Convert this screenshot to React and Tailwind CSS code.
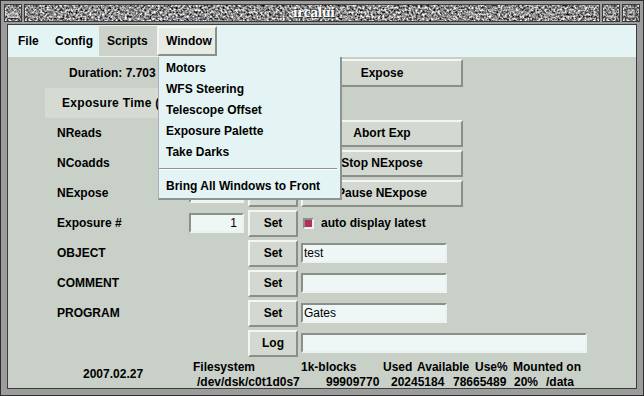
import React from 'react';

const up = 'border-2 border-t-[#f3f6f3] border-l-[#f3f6f3] border-b-[#8a9089] border-r-[#8a9089]';
const down = 'border-2 border-t-[#8a9089] border-l-[#8a9089] border-b-[#eef2ee] border-r-[#eef2ee]';

function Granite({ id, w, h, children }) {
  return (
    <svg width={w} height={h} className="block">
      <defs>
        <filter id={id} x="0" y="0" width="100%" height="100%" colorInterpolationFilters="sRGB">
          <feTurbulence type="fractalNoise" baseFrequency="0.45" numOctaves="3" seed="7" />
          <feColorMatrix
            type="matrix"
            values="1.7 0 0 0 -0.3  1.7 0 0 0 -0.3  1.7 0 0 0 -0.3  0 0 0 0 1"
          />
        </filter>
      </defs>
      <rect width={w} height={h} filter={`url(#${id})`} />
      {children}
    </svg>
  );
}

function TitleButton({ id, children }) {
  return (
    <div className="w-[18px] h-[18px] border border-[#3a3a3a] shrink-0">
      <Granite id={id} w={16} h={16}>
        {children}
      </Granite>
    </div>
  );
}

function Btn({ w, h = 'h-[27px]', children }) {
  return (
    <div className={`${w} ${h} ${up} shrink-0 bg-[#d3d9d1] flex items-center justify-center font-bold`}>
      {children}
    </div>
  );
}

function Entry({ w, right, children }) {
  return (
    <div
      className={`${w} h-[20px] ${down} shrink-0 bg-[#eef6f6] flex items-center font-normal ${
        right ? 'justify-end pr-[5px]' : 'pl-[1px]'
      }`}
    >
      {children}
    </div>
  );
}

// rows under the open menu keep their widgets but the covered texts are left out
function Row({ label, entry, btn = 'Set', children }) {
  return (
    <div className="flex h-[30px] items-center">
      <div className="w-[181px] pl-[49px] shrink-0">{label}</div>
      {entry !== undefined ? <Entry w="w-[55px]" right>{entry}</Entry> : <div className="w-[55px] shrink-0" />}
      <div className="ml-[4px]">
        <Btn w="w-[50px]">{btn}</Btn>
      </div>
      <div className="ml-[3px] flex items-center">{children}</div>
    </div>
  );
}

const menuItems = ['Motors', 'WFS Steering', 'Telescope Offset', 'Exposure Palette', 'Take Darks'];

export default function App() {
  return (
    <div className="relative w-[644px] h-[396px] bg-[#9c9c9c] border border-[#2f2f2f] flex flex-col overflow-hidden text-[12px] text-black font-['Liberation_Sans',Arial,sans-serif]">
      {/* title bar */}
      <div className="h-[23px] flex items-center px-[3px] gap-[2px] shrink-0">
        <TitleButton id="tb1">
          <rect x="3" y="9" width="10" height="4" fill="none" stroke="#f0f0f0" strokeWidth="1" />
          <line x1="3" y1="13.5" x2="13" y2="13.5" stroke="#303030" />
        </TitleButton>
        <div className="flex-1 h-[18px] border border-[#3a3a3a]">
          <Granite id="tstrip" w={574} h={16}>
            <text x="290" y="13" textAnchor="middle" fontFamily="Liberation Serif" fontWeight="bold" fontSize="15" fill="#2a2a2a">
              ircalui
            </text>
            <text x="289" y="12" textAnchor="middle" fontFamily="Liberation Serif" fontWeight="bold" fontSize="15" fill="#ffffff">
              ircalui
            </text>
          </Granite>
        </div>
        <TitleButton id="tb2">
          <path d="M9 5 V10 H5" fill="none" stroke="#303030" strokeWidth="1.2" />
          <path d="M10 4 V11 H4" fill="none" stroke="#eeeeee" strokeWidth="0.8" />
        </TitleButton>
        <TitleButton id="tb3">
          <rect x="4" y="4" width="8" height="9" fill="none" stroke="#303030" strokeWidth="1" />
          <rect x="5" y="5" width="6" height="7" fill="none" stroke="#e8e8e8" strokeWidth="0.7" />
        </TitleButton>
      </div>

      {/* client area */}
      <div className="flex-1 mx-[6px] mb-[6px] border border-[#3c3c3c] bg-[#c9d0c8] flex flex-col overflow-hidden">
        {/* menu bar */}
        <div className="h-[32px] shrink-0 bg-[#e4f4f4] flex items-center font-bold">
          <div className="w-[39px] pl-[10px]">File</div>
          <div className="w-[52px] pl-[8px]">Config</div>
          <div className="w-[58px] h-[30px] pl-[8px] bg-[#cdd3cb] flex items-center">Scripts</div>
          <div className={`w-[60px] h-[30px] pl-[7px] bg-[#e6ebe6] flex items-center ${up}`}>Window</div>
        </div>

        {/* form */}
        <div className="pt-[1px] font-bold">
          <div className="flex h-[30px] items-center">
            <div className="w-[293px] pl-[61px] shrink-0">Duration: 7.703</div>
            <Btn w="w-[162px]" h="h-[28px]">Expose</Btn>
          </div>
          <div className="flex h-[30px]">
            <div className="ml-[37px] w-[255px] bg-[#d5dbd3] flex items-center pl-[17px] tracking-[0.3px]">Exposure Time (</div>
          </div>
          <Row label="NReads" entry="" btn="">
            <Btn w="w-[162px]">Abort Exp</Btn>
          </Row>
          <Row label="NCoadds" entry="" btn="">
            <Btn w="w-[162px]">Stop NExpose</Btn>
          </Row>
          <Row label="NExpose" entry="" btn="">
            <Btn w="w-[162px]">Pause NExpose</Btn>
          </Row>
          <Row label="Exposure #" entry="1">
            <div className="flex items-center gap-[7px]">
              <div className={`w-[11px] h-[11px] ${down} bg-[#b03060] ml-[2px]`} />
              <span>auto display latest</span>
            </div>
          </Row>
          <Row label="OBJECT">
            <Entry w="w-[146px]">test</Entry>
          </Row>
          <Row label="COMMENT">
            <Entry w="w-[146px]"></Entry>
          </Row>
          <Row label="PROGRAM">
            <Entry w="w-[146px]">Gates</Entry>
          </Row>
          <Row label="" btn="Log">
            <Entry w="w-[286px]"></Entry>
          </Row>
          <div className="flex h-[30px] whitespace-nowrap">
            <div className="w-[185px] pl-[75px] pt-[9px] leading-[15px] shrink-0">2007.02.27</div>
            <div className="pt-[2px] leading-[15px]">
              <div className="flex">
                <span className="w-[108px] shrink-0">Filesystem</span>
                <span className="w-[82px] shrink-0">1k-blocks</span>
                <span className="w-[34px] shrink-0">Used</span>
                <span className="w-[58px] shrink-0">Available</span>
                <span className="w-[38px] shrink-0">Use%</span>
                <span>Mounted on</span>
              </div>
              <div className="flex ml-[4px]">
                <span className="w-[129px] shrink-0">/dev/dsk/c0t1d0s7</span>
                <span className="w-[65px] shrink-0">99909770</span>
                <span className="w-[62px] shrink-0">20245184</span>
                <span className="w-[61px] shrink-0">78665489</span>
                <span className="w-[32px] shrink-0">20%</span>
                <span>/data</span>
              </div>
            </div>
          </div>
        </div>
      </div>

      {/* open Window menu */}
      <div className="absolute left-[157px] top-[56px] w-[184px] bg-[#e4f4f4] border-l border-l-[#a9b2b2] border-r-2 border-r-[#8c9393] border-b-2 border-b-[#8c9393] font-bold pb-[2px]">
        {menuItems.map((m) => (
          <div key={m} className="h-[21px] flex items-center pl-[7px]">
            {m}
          </div>
        ))}
        <div className="h-[13px] flex items-center pr-[3px]">
          <div className="w-full h-[2px] border-t border-t-[#8c9393] border-b border-b-[#ffffff]" />
        </div>
        <div className="h-[21px] flex items-center pl-[7px]">Bring All Windows to Front</div>
      </div>
    </div>
  );
}
